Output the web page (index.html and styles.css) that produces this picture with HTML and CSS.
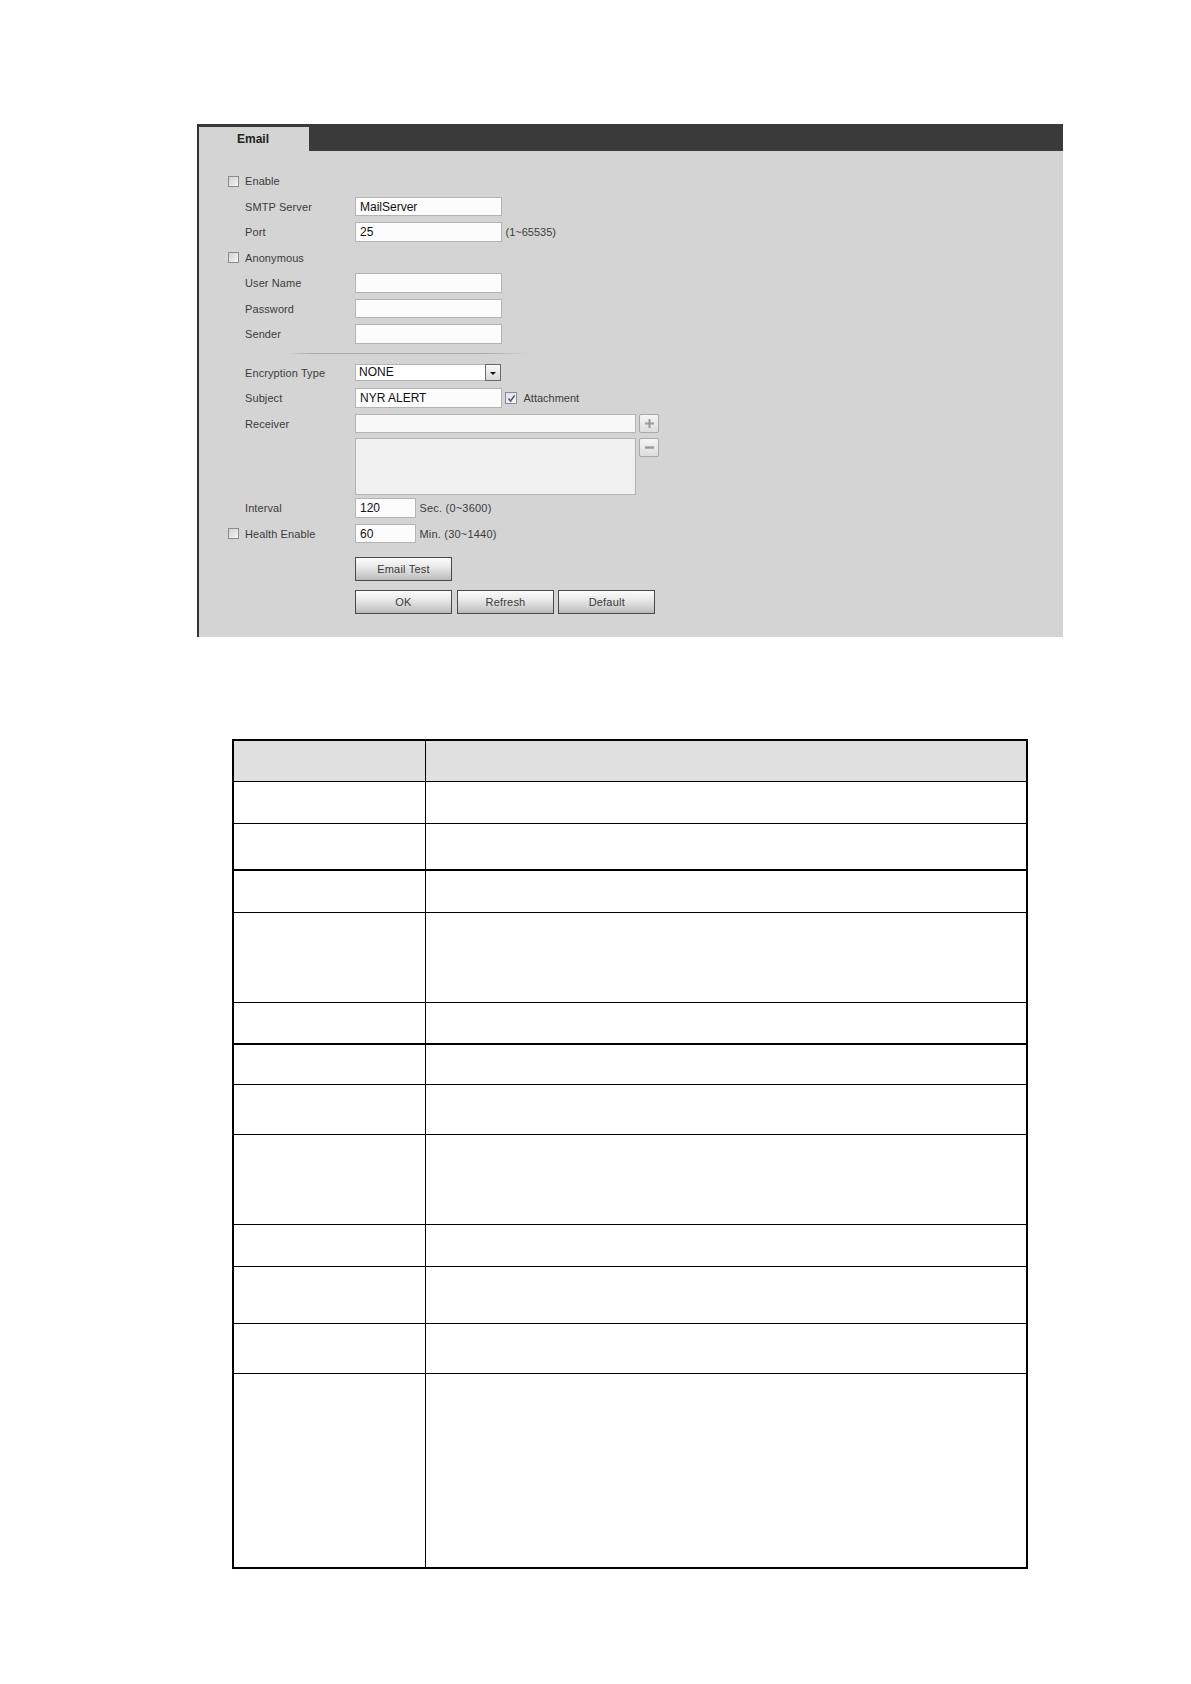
FILE: index.html
```html
<!DOCTYPE html>
<html>
<head>
<meta charset="utf-8">
<link rel="stylesheet" href="styles.css">
</head>
<body>
<div class="panel">
  <div class="tabbar"><div class="tab">Email</div></div>
  <div class="form">
    <div class="row"><span class="slot"><span class="cb"></span></span><span class="label">Enable</span></div>
    <div class="row"><span class="slot"></span><span class="label">SMTP Server</span><span class="input w147">MailServer</span></div>
    <div class="row"><span class="slot"></span><span class="label">Port</span><span class="input w147">25</span><span class="hint">(1~65535)</span></div>
    <div class="row"><span class="slot"><span class="cb"></span></span><span class="label">Anonymous</span></div>
    <div class="row"><span class="slot"></span><span class="label">User Name</span><span class="input w147"></span></div>
    <div class="row"><span class="slot"></span><span class="label">Password</span><span class="input w147"></span></div>
    <div class="row"><span class="slot"></span><span class="label">Sender</span><span class="input w147"></span></div>
    <div class="sep"></div>
    <div class="row"><span class="slot"></span><span class="label">Encryption Type</span><span class="select"><span class="sel-text">NONE</span><span class="sel-btn"><span class="tri"></span></span></span></div>
    <div class="row"><span class="slot"></span><span class="label">Subject</span><span class="input w147">NYR ALERT</span><span class="cb checked att"><svg viewBox="0 0 9 9" width="9" height="9"><path d="M1.5 4.5 L3.6 7 L7.6 1.5" fill="none" stroke="#4a4a8a" stroke-width="1.4"/></svg></span><span class="att-label">Attachment</span></div>
    <div class="row"><span class="slot"></span><span class="label">Receiver</span><span class="input w281 recv"></span><span class="pm"><svg viewBox="0 0 11 11" width="11" height="11"><path d="M5.5 1 V10 M1 5.5 H10" stroke="#9a9a9a" stroke-width="2"/></svg></span></div>
    <div class="row tall"><span class="slot"></span><span class="label"></span><span class="textarea"></span><span class="pm"><svg viewBox="0 0 11 11" width="11" height="11"><path d="M1 5.5 H10" stroke="#9a9a9a" stroke-width="2.4"/></svg></span></div>
    <div class="row"><span class="slot"></span><span class="label">Interval</span><span class="input w61">120</span><span class="hint2">Sec. (0~3600)</span></div>
    <div class="row"><span class="slot"><span class="cb"></span></span><span class="label">Health Enable</span><span class="input w61">60</span><span class="hint2">Min. (30~1440)</span></div>
    <div class="btnrow first"><span class="btn">Email Test</span></div>
    <div class="btnrow second"><span class="btn">OK</span><span class="btn">Refresh</span><span class="btn">Default</span></div>
  </div>
</div>

<div class="tbl">
  <div class="tr head r-head"><div class="c1"></div><div class="c2"></div></div>
  <div class="tr r42"><div class="c1"></div><div class="c2"></div></div>
  <div class="tr r45"><div class="c1"></div><div class="c2"></div></div>
  <div class="tr thick r43"><div class="c1"></div><div class="c2"></div></div>
  <div class="tr r90"><div class="c1"></div><div class="c2"></div></div>
  <div class="tr r41"><div class="c1"></div><div class="c2"></div></div>
  <div class="tr thick r41b"><div class="c1"></div><div class="c2"></div></div>
  <div class="tr r50"><div class="c1"></div><div class="c2"></div></div>
  <div class="tr r90"><div class="c1"></div><div class="c2"></div></div>
  <div class="tr r42"><div class="c1"></div><div class="c2"></div></div>
  <div class="tr r57"><div class="c1"></div><div class="c2"></div></div>
  <div class="tr r50"><div class="c1"></div><div class="c2"></div></div>
  <div class="tr r194"><div class="c1"></div><div class="c2"></div></div>
</div>
</body>
</html>
```
FILE: styles.css
```css
* { box-sizing: border-box; }
html, body { margin: 0; padding: 0; background: #ffffff; }
body { font-family: "Liberation Sans", Arial, sans-serif; color: #333; }

.panel {
  margin-left: 197px;
  margin-top: 124px;
  width: 866px;
  height: 513px;
  background: #d4d4d4;
  border-left: 2px solid #333;
}
.tabbar {
  height: 27px;
  background: #3a3a3a;
  padding-top: 3px;
}
.tab {
  width: 110px;
  height: 24px;
  background: #d4d4d4;
  font-size: 12px;
  font-weight: bold;
  color: #222;
  padding-left: 38px;
  line-height: 24px;
}
.form { padding-top: 17.25px; padding-left: 28.7px; }
.row {
  height: 25.5px;
  display: flex;
  align-items: center;
  font-size: 11px;
}
.row.tall { height: 59px; align-items: flex-start; padding-top: 2px; }
.slot { width: 17.3px; flex: none; display: flex; align-items: center; }
.label { width: 110px; flex: none; color: #3c3c3c; letter-spacing: 0.1px; }
.cb {
  display: inline-block;
  width: 11px;
  height: 11px;
  border: 1px solid #8c8c8c;
  background: linear-gradient(135deg, #d0d0d0, #f6f6f6);
}
.cb.checked { display: inline-flex; align-items: center; justify-content: center; background: linear-gradient(135deg, #dcdce4, #fafafa); }
.att { margin-left: 3.5px; width: 12px; height: 12px; }
.att-label { margin-left: 6px; color: #3c3c3c; }
.input {
  flex: none;
  height: 19.5px;
  background: #fcfcfc;
  border: 1px solid #b4b4b4;
  font-size: 12px;
  color: #111;
  padding-left: 4px;
  padding-top: 1px;
  line-height: 17px;
}
.w147 { width: 147px; }
.w281 { width: 281px; }
.w61 { width: 61px; }
.recv { background: #f8f8f8; }
.hint { margin-left: 3.5px; color: #3c3c3c; }
.hint2 { margin-left: 3.5px; color: #3c3c3c; letter-spacing: 0.2px; }
.sep {
  height: 1px;
  margin: 6px 0 6px 60px;
  width: 240px;
  background: linear-gradient(90deg, rgba(168,168,168,0), #a8a8a8 10%, #a8a8a8 82%, rgba(168,168,168,0));
}
.select {
  flex: none;
  width: 146px;
  height: 17.5px;
  background: #ffffff;
  border: 1px solid #b4b4b4;
  display: flex;
  align-items: stretch;
}
.sel-text { flex: 1; font-size: 12px; color: #111; padding-left: 3px; line-height: 15.5px; }
.sel-btn {
  width: 15.5px;
  border: 1px solid #6a6a6a;
  background: linear-gradient(#fafafa, #d8d8d8);
  display: flex;
  align-items: center;
  justify-content: center;
  margin: -1px -1px -1px 0;
}
.tri {
  width: 0; height: 0;
  border-left: 3px solid transparent;
  border-right: 3px solid transparent;
  border-top: 3px solid #111;
  margin-top: 1px;
}
.textarea {
  flex: none;
  width: 281px;
  height: 56.5px;
  background: #f0f0f0;
  border: 1px solid #b4b4b4;
}
.pm {
  flex: none;
  margin-left: 3.5px;
  width: 19.5px;
  height: 19px;
  border: 1px solid #a8a8a8;
  border-radius: 2px;
  background: linear-gradient(#f6f6f6, #dcdcdc);
  display: flex;
  align-items: center;
  justify-content: center;
}
.btnrow { display: flex; padding-left: 127.3px; gap: 5px; }
.btnrow.first { margin-top: 11px; }
.btnrow.second { margin-top: 9.25px; }
.btn {
  width: 97px;
  height: 23.5px;
  border: 1px solid #4a4a4a;
  background: linear-gradient(#fbfbfb 0%, #ececec 35%, #cfcfcf 75%, #b9b9b9 100%);
  font-size: 11px;
  color: #3a3a3a;
  display: flex;
  align-items: center;
  justify-content: center;
  letter-spacing: 0.2px;
}
.btnrow.second .btn:last-child { margin-left: -0.7px; }

.tbl {
  margin-left: 232.3px;
  margin-top: 102.3px;
  width: 795.5px;
  border: 2px solid #000;
}
.tr { display: flex; border-top: 1px solid #000; }
.tr.head { border-top: none; background: #e0e0e0; }
.tr.thick { border-top: 2px solid #000; }
.c1 { width: 191.5px; border-right: 1.3px solid #000; flex: none; }
.c2 { flex: 1; }
.r-head { height: 40px; }
.r42 { height: 42px; }
.r45 { height: 45.5px; }
.r43 { height: 43px; }
.r90 { height: 90px; }
.r41 { height: 41px; }
.r41b { height: 41px; }
.r50 { height: 50px; }
.r57 { height: 57px; }
.r194 { height: 194.5px; }
```
